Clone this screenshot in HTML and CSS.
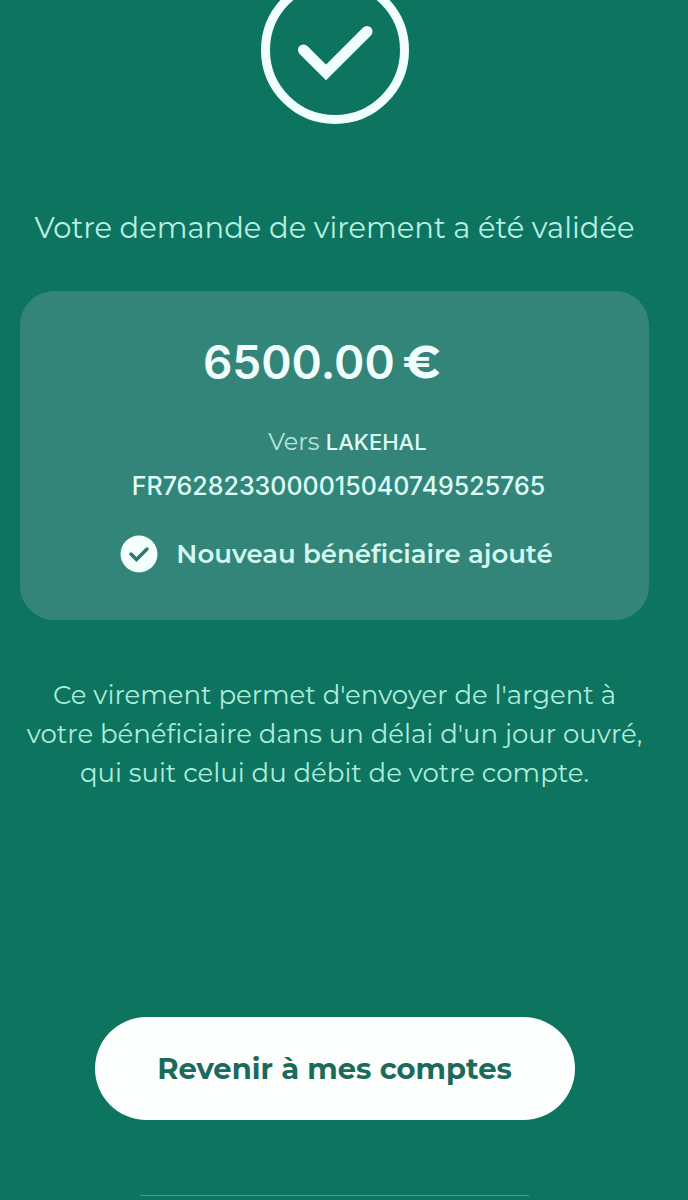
FILE: index.html
```html
<!DOCTYPE html>
<html lang="fr">
<head>
<meta charset="utf-8">
<meta name="viewport" content="width=device-width, initial-scale=1">
<title>Virement validé</title>
<link rel="stylesheet" href="styles.css">
</head>
<body>
<main class="screen">
  <svg class="status-icon" viewBox="0 0 148 125" aria-hidden="true">
    <circle cx="74" cy="50" r="69.5" fill="none" stroke="currentColor" stroke-width="9"/>
    <path d="M42.500 50L65 72.500L106 31.500" fill="none" stroke="currentColor" stroke-width="11" stroke-linecap="round"/>
  </svg>
  <h1 class="title">Votre demande de virement a été validée</h1>
  <section class="card">
    <p class="amount"><span>6500.00</span><span class="currency">€</span></p>
    <p class="recipient">Vers <span class="name">LAKEHAL</span></p>
    <p class="iban">FR7628233000015040749525765</p>
    <p class="added">
      <svg class="added-icon" viewBox="0 0 38 38" aria-hidden="true">
        <circle cx="19" cy="19" r="18.500" fill="currentColor"/>
        <path class="added-tick" d="M11 19L16.500 24.500L27 14" fill="none" stroke-width="3.500" stroke-linecap="round"/>
      </svg>
      <span>Nouveau bénéficiaire ajouté</span>
    </p>
  </section>
  <p class="note">Ce virement permet d'envoyer de l'argent à votre bénéficiaire dans un délai d'un jour ouvré, qui suit celui du débit de votre compte.</p>
  <button class="back" type="button">Revenir à mes comptes</button>
  <div class="home-line"></div>
</main>
</body>
</html>
```
FILE: styles.css
```css
* { box-sizing: border-box; }
body {
  margin: 0;
  background: #0d745f;
  color: #f0fffd;
  font-family: Montserrat, Inter, "Liberation Sans", sans-serif;
}
h1, p { margin: 0; }
.screen {
  min-height: 100vh;
  padding: 0 39px 4px 20px;
  display: flex;
  flex-direction: column;
  align-items: center;
}
.status-icon { width: 148px; height: 125px; flex: none; }
.title {
  margin-top: 83px;
  font-size: 29px;
  line-height: 40px;
  font-weight: 400;
  color: #b8efe3;
  text-align: center;
}
.card {
  width: 100%;
  margin-top: 43px;
  padding: 43px 20px 47px;
  border-radius: 34px;
  background: #33857a;
  display: flex;
  flex-direction: column;
  align-items: center;
  text-align: center;
}
.amount {
  display: flex;
  gap: 8px;
  padding-right: 26px;
  font-family: Inter, "Liberation Sans", sans-serif;
  font-size: 46px;
  line-height: 56px;
  font-weight: 600;
}
.currency {
  font-family: Montserrat, Inter, sans-serif;
  font-weight: 700;
}
.recipient {
  margin-top: 34px;
  padding-left: 26px;
  font-size: 24px;
  line-height: 36px;
  font-weight: 400;
  color: #b4e6db;
}
.name {
  font-family: Inter, "Liberation Sans", sans-serif;
  font-size: 22px;
  font-weight: 500;
  color: #dcfcf6;
}
.iban {
  margin-top: 10px;
  padding-left: 8px;
  font-family: Inter, "Liberation Sans", sans-serif;
  font-size: 25px;
  line-height: 32px;
  font-weight: 500;
  color: #dcfcf6;
}
.added {
  margin-top: 33px;
  padding-left: 4px;
  display: flex;
  align-items: center;
  gap: 18px;
  font-size: 26px;
  line-height: 38px;
  font-weight: 600;
  color: #d2f8ef;
}
.added-icon { width: 38px; height: 38px; flex: none; color: #f2fffd; }
.added-tick { stroke: #33756a; }
.note {
  width: 100%;
  margin-top: 56px;
  font-size: 26px;
  line-height: 39px;
  color: #aeebdc;
  text-align: center;
}
.back {
  width: 480px;
  max-width: 100%;
  margin-top: auto;
  padding: 32px 20px;
  border: 0;
  border-radius: 52px;
  background: #fdfffe;
  color: #1b6b5b;
  font: inherit;
  font-size: 29px;
  line-height: 39px;
  font-weight: 700;
}
.home-line {
  width: 62%;
  height: 1px;
  margin-top: 75px;
  background: #4f9c8b;
}
```
